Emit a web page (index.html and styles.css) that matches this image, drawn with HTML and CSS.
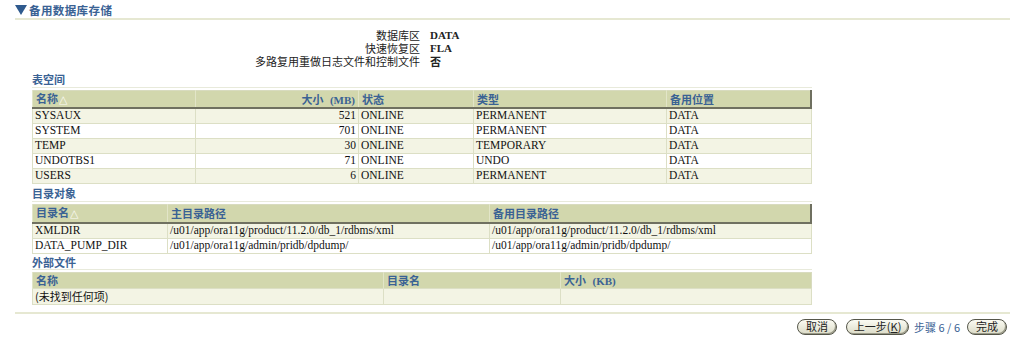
FILE: index.html
```html
<!DOCTYPE html>
<html lang="zh-CN">
<head>
    <meta charset="UTF-8">
    <title>备用数据库存储</title>
    <link rel="stylesheet" href="styles.css">
</head>
<body>
    <div class="page">
        <div class="page-title">
            <span class="toggle"></span>
            <h1>备用数据库存储</h1>
        </div>

        <div class="info">
            <span class="label">数据库区</span><span class="value">DATA</span>
            <span class="label">快速恢复区</span><span class="value">FLA</span>
            <span class="label">多路复用重做日志文件和控制文件</span><span class="value cjk">否</span>
        </div>

        <div class="section first">
            <h2>表空间</h2>
            <table class="grid bevel">
                <colgroup>
                    <col style="width:163px"><col style="width:163px"><col style="width:115px"><col style="width:193px"><col>
                </colgroup>
                <thead>
                    <tr>
                        <th>名称<span class="sort">△</span></th>
                        <th class="num">大小 <span class="unit">(MB)</span></th>
                        <th>状态</th>
                        <th>类型</th>
                        <th>备用位置</th>
                    </tr>
                </thead>
                <tbody>
                    <tr><td>SYSAUX</td><td class="num">521</td><td>ONLINE</td><td>PERMANENT</td><td>DATA</td></tr>
                    <tr><td>SYSTEM</td><td class="num">701</td><td>ONLINE</td><td>PERMANENT</td><td>DATA</td></tr>
                    <tr><td>TEMP</td><td class="num">30</td><td>ONLINE</td><td>TEMPORARY</td><td>DATA</td></tr>
                    <tr><td>UNDOTBS1</td><td class="num">71</td><td>ONLINE</td><td>UNDO</td><td>DATA</td></tr>
                    <tr><td>USERS</td><td class="num">6</td><td>ONLINE</td><td>PERMANENT</td><td>DATA</td></tr>
                </tbody>
            </table>
        </div>

        <div class="section">
            <h2>目录对象</h2>
            <table class="grid bevel tall">
                <colgroup>
                    <col style="width:135px"><col style="width:322px"><col>
                </colgroup>
                <thead>
                    <tr>
                        <th>目录名<span class="sort">△</span></th>
                        <th>主目录路径</th>
                        <th>备用目录路径</th>
                    </tr>
                </thead>
                <tbody>
                    <tr><td>XMLDIR</td><td>/u01/app/ora11g/product/11.2.0/db_1/rdbms/xml</td><td>/u01/app/ora11g/product/11.2.0/db_1/rdbms/xml</td></tr>
                    <tr><td>DATA_PUMP_DIR</td><td>/u01/app/ora11g/admin/pridb/dpdump/</td><td>/u01/app/ora11g/admin/pridb/dpdump/</td></tr>
                </tbody>
            </table>
        </div>

        <div class="section last">
            <h2>外部文件</h2>
            <table class="grid">
                <colgroup>
                    <col style="width:351px"><col style="width:177px"><col>
                </colgroup>
                <thead>
                    <tr>
                        <th>名称</th>
                        <th>目录名</th>
                        <th>大小 <span class="unit">(KB)</span></th>
                    </tr>
                </thead>
                <tbody>
                    <tr><td class="cjk">(未找到任何项)</td><td></td><td></td></tr>
                </tbody>
            </table>
        </div>

        <div class="footer">
            <button class="btn">取消</button>
            <button class="btn wide">上一步(<u>K</u>)</button>
            <span class="step">步骤 6 / 6</span>
            <button class="btn">完成</button>
        </div>
    </div>
</body>
</html>
```

FILE: styles.css
```css
* {
    box-sizing: border-box;
}
body {
    margin: 0;
    background-color: #ffffff;
    font-family: "Noto Sans CJK SC", "Liberation Sans", sans-serif;
    font-size: 11px;
    color: #000;
}
.page {
    padding: 0 14px 0 15px;
}
.page-title {
    display: flex;
    align-items: center;
    height: 20px;
    padding-top: 1px;
    border-bottom: 2px solid #e6e8d2;
}
.toggle {
    width: 0;
    height: 0;
    border-left: 6px solid transparent;
    border-right: 6px solid transparent;
    border-top: 10px solid #2f5a8e;
    margin-right: 2px;
}
h1 {
    margin: 0;
    font-size: 11.5px;
    font-weight: bold;
    color: #3a6294;
    letter-spacing: 0.4px;
}

/* summary */
.info {
    display: grid;
    grid-template-columns: 405px auto;
    column-gap: 10px;
    padding-top: 9px;
    line-height: 13px;
}
.info .label {
    text-align: right;
    color: #222;
}
.info .value {
    font-family: "Liberation Serif", serif;
    font-weight: bold;
    color: #222;
}
.info .value.cjk {
    font-family: "Noto Sans CJK SC", sans-serif;
}

/* sections */
.section {
    margin-left: 17px;
    width: 780px;
}
.section.first {
    margin-top: 2px;
}
.section h2 {
    margin: 0 0 2px;
    height: 18px;
    line-height: 18px;
    font-size: 11px;
    font-weight: bold;
    color: #3a6294;
    border-bottom: 1px solid #e8eadb;
}
.section.last h2 {
    height: 16px;
    line-height: 16px;
}
.grid {
    width: 100%;
    border-collapse: collapse;
    table-layout: fixed;
    border: 1px solid #d8dbbf;
}
.grid th {
    background-color: #d2d7ad;
    color: #3a6294;
    font-weight: bold;
    text-align: left;
    height: 15px;
    padding: 0 3px;
    line-height: 14px;
    border-left: 1px solid #e2e5c8;
    white-space: nowrap;
}
.bevel th {
    height: 17px;
    border-bottom: 2px solid #6f7060;
}
.bevel.tall th {
    height: 19px;
}
.bevel th:last-child {
    border-right: 2px solid #6f7060;
}
.grid th .sort {
    color: #fbfbf4;
    font-family: "DejaVu Sans", sans-serif;
    font-size: 11px;
    font-weight: normal;
    padding-left: 1px;
}
.grid th .unit {
    font-family: "Liberation Serif", serif;
    padding-left: 4px;
}
.grid td {
    font-family: "Liberation Serif", serif;
    font-size: 11.5px;
    height: 15px;
    line-height: 13px;
    padding: 0 2px;
    border: 1px solid #dcdfc5;
    white-space: nowrap;
    overflow: hidden;
    color: #111;
}
.grid td.cjk {
    font-family: "Noto Sans CJK SC", sans-serif;
    font-size: 11px;
}
.grid tbody tr:nth-child(odd) td {
    background-color: #f3f4e4;
}
.grid .num {
    text-align: right;
}
.grid tbody tr:only-child td {
    height: 16px;
}

/* footer */
.footer {
    display: flex;
    justify-content: flex-end;
    align-items: center;
    gap: 9px;
    margin-top: 7px;
    padding-top: 5px;
    padding-right: 3px;
    border-top: 2px solid #e6e8d2;
}
.btn {
    height: 16px;
    width: 40px;
    padding: 0;
    font-family: "Noto Sans CJK SC", sans-serif;
    font-size: 11px;
    line-height: 13px;
    color: #222;
    border: 1px solid #55564a;
    border-radius: 8px;
    background: linear-gradient(#fbfbf3, #dcdcc8);
    box-shadow: inset -1px -1px 0 #9a9a88;
}
.btn.wide {
    width: 63px;
}
.step {
    color: #3a6294;
    margin: 0 -2px 0 -4px;
}
```
